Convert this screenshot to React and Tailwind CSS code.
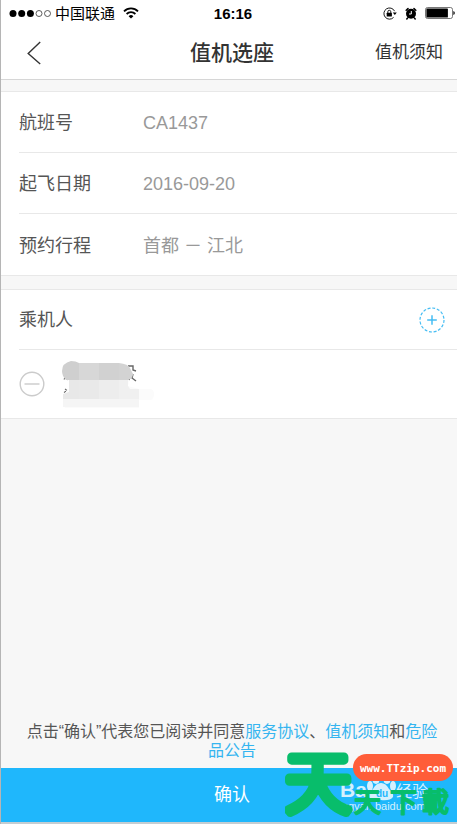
import React from 'react';

const flightInfo = [
  { label: '航班号', value: 'CA1437' },
  { label: '起飞日期', value: '2016-09-20' },
  { label: '预约行程', value: '首都 － 江北' },
];

const StatusBar = () => {
  return (
    <div className="grid h-[26px] grid-cols-3 items-center pr-0.5 pl-2 text-[15px] leading-none text-black">
      <div className="flex items-center gap-1">
        <svg width="42" height="9" viewBox="0 0 42 9">
          <circle cx="4" cy="4.5" r="3.5" fill="#000" />
          <circle cx="12.7" cy="4.5" r="3.5" fill="#000" />
          <circle cx="21.4" cy="4.5" r="3.5" fill="#000" />
          <circle cx="30" cy="4.5" r="3" fill="none" stroke="#333" strokeWidth="0.8" />
          <circle cx="38.5" cy="4.5" r="3" fill="none" stroke="#333" strokeWidth="0.8" />
        </svg>
        <span className="pr-1 whitespace-nowrap">中国联通</span>
        <svg width="16" height="12" viewBox="0 0 16 12" fill="none" stroke="#000" strokeWidth="1.8">
          <path d="M1 4.3a10 10 0 0 1 14 0" />
          <path d="M3.6 7a6.3 6.3 0 0 1 8.8 0" />
          <path d="M8 11.6 5.6 9.2a3.4 3.4 0 0 1 4.8 0z" fill="#000" stroke="none" />
        </svg>
      </div>
      <span className="pl-0.5 text-center font-bold">16:16</span>
      <div className="flex items-center justify-end gap-2">
        <svg width="14" height="13" viewBox="0 0 14 13">
          <path d="M11.6 4.2A5.6 5.6 0 1 0 10.6 10.4" fill="none" stroke="#000" strokeWidth="0.9" />
          <path d="M9.8 5.6h4L11.8 8z" fill="#000" />
          <rect x="3.7" y="5.8" width="5.2" height="3.8" rx="0.5" fill="#000" />
          <path d="M4.8 6V4.8a1.5 1.5 0 0 1 3 0V6" fill="none" stroke="#000" strokeWidth="0.9" />
        </svg>
        <svg width="12" height="13" viewBox="0 0 12 13">
          <circle cx="6" cy="6.8" r="5" fill="#000" />
          <path d="M1.2 3.2 3 1.6M10.8 3.2 9 1.6M2.6 11l-.8 1M9.4 11l.8 1" stroke="#000" strokeWidth="1.5" strokeLinecap="round" />
          <path d="M6.3 4v3H4" fill="none" stroke="#fff" strokeWidth="1" />
        </svg>
        <svg width="30" height="12" viewBox="0 0 30 12">
          <rect x="0.5" y="0.5" width="27" height="11" rx="2" fill="#fff" stroke="#555" strokeWidth="0.8" />
          <rect x="1.4" y="1.4" width="21.5" height="9.2" rx="0.6" fill="#000" />
          <path d="M28.4 4q1.4 0.4 1.4 2t-1.4 2z" fill="#000" />
        </svg>
      </div>
    </div>
  );
};

const Header = () => {
  return (
    <header className="grid h-[54px] grid-cols-[1fr_auto_1fr] items-center border-b border-[#d6d6d6] pr-3.5 pl-5">
      <button type="button" aria-label="返回" className="flex h-10 w-10 items-center pl-1.5">
        <svg width="14" height="24" viewBox="0 0 14 24" fill="none" stroke="#333" strokeWidth="1.4">
          <path d="M13.2 1 1.2 12.5 13.2 23" />
        </svg>
      </button>
      <h1 className="text-[21px] font-medium text-[#333]">值机选座</h1>
      <a href="#notice" className="justify-self-end text-[17px] text-[#333]">值机须知</a>
    </header>
  );
};

// Blurred-out passenger name and ID
const MaskedPassenger = () => {
  return (
    <svg width="100" height="48" viewBox="0 0 100 48" role="img" aria-label="乘机人信息">
      <path d="M3 19.5l1-2M6 19.8l2-1M4 29l2 1.4M3 32.5l2-1.2M3 44l2 1" stroke="#666" strokeWidth="1.1" />
      <path d="M67 6h5v4l3 1M72 14l-1 4 4 3M69 17l-1 3" fill="none" stroke="#666" strokeWidth="1.4" />
      <path d="M8 20h60l-1 6 11 3h12q3 1 3 5t-3 6H78v8H28q-2 2-12 2T2 46V35l6-6z" fill="#fbfbfb" />
      <path d="M8 20h10v19H2v-5l6-2z" fill="#e8e8e8" />
      <path d="M18 20h20v19H18z" fill="#e9e9e9" />
      <path d="M38 20h20v19H38z" fill="#ededed" />
      <path d="M58 20h9v6l2 3h9v10H58z" fill="#f0f0f0" />
      <path d="M2 39h76v8H2z" fill="#f5f5f5" />
      <path d="M10 1q5 0 8 2v17H5q-4-4-4-9 0-8 9-10z" fill="#cfcfcf" />
      <path d="M18 3h20v17H18z" fill="#d7d7d7" />
      <path d="M38 3h20v17H38z" fill="#d1d1d1" />
      <path d="M58 3q9 1 11 5l3 6q0 4-5 6h-9z" fill="#d3d3d3" />
    </svg>
  );
};

const Watermark = () => {
  return (
    <svg
      width="172"
      height="76"
      viewBox="0 0 172 76"
      className="pointer-events-none absolute right-0 bottom-0"
    >
      <g fill="#d5f0fd">
        <text x="55" y="51" fontSize="21" fontWeight="700">Bai</text>
        <ellipse cx="91" cy="32" rx="4" ry="6" />
        <ellipse cx="102" cy="32" rx="4" ry="6" />
        <ellipse cx="85" cy="40" rx="3" ry="5" />
        <ellipse cx="108" cy="40" rx="3" ry="5" />
        <path d="M96 37q5 0 8 6 5 4 4 8-3 4-12 3-9 1-12-3-1-4 4-8 3-6 8-6z" />
        <text x="111" y="51" fontSize="16">经验</text>
        <text x="52" y="64" fontSize="11">jingyan.baidu.com</text>
      </g>
      <text x="91" y="51" fontSize="10" fontWeight="700" fill="#1fb7fc">du</text>
      <g fill="#08bd6b" stroke="#08bd6b" strokeLinejoin="round" strokeLinecap="round">
        <text x="0" y="61" fontSize="66" strokeWidth="9" fontWeight="300">天</text>
        <text x="69 105 137" y="66" fontSize="27" strokeWidth="2">天下載</text>
      </g>
      <rect x="68" y="8" width="100" height="27" rx="13.5" fill="#ff5d39" />
      <text x="118" y="26" fontSize="11" fontWeight="700" textAnchor="middle" fill="#fff" className="font-['DejaVu_Sans_Mono','Liberation_Mono',monospace]">
        www.TTzip.com
      </text>
    </svg>
  );
};

const App = () => {
  return (
    <div className="flex min-h-screen flex-col border-l border-[#b5b5b5] bg-[#f7f7f7] font-['Liberation_Sans','Noto_Sans_CJK_SC',sans-serif]">
      <div className="bg-white">
        <StatusBar />
        <Header />
      </div>

      <main className="flex grow flex-col">
        {/* Flight details */}
        <section className="mt-[11px] border-y border-[#e8e8e8] bg-white pl-[18px]">
          <dl className="divide-y divide-[#e8e8e8] text-lg">
            {flightInfo.map((item) => (
              <div key={item.label} className="flex h-[61px] items-center pt-0.5">
                <dt className="w-[124px] text-[#555]">{item.label}</dt>
                <dd className="text-[#999]">{item.value}</dd>
              </div>
            ))}
          </dl>
        </section>

        {/* Passengers */}
        <section className="mt-[13px] border-y border-[#e8e8e8] bg-white pl-[18px]">
          <div className="flex h-[60px] items-center justify-between border-b border-[#e8e8e8] pr-3">
            <h2 className="text-lg text-[#555]">乘机人</h2>
            <button type="button" aria-label="添加乘机人">
              <svg width="26" height="26" viewBox="0 0 26 26" fill="none" stroke="#45bdf3">
                <circle cx="13" cy="13" r="12" strokeWidth="1.2" strokeDasharray="3 1.7" />
                <path d="M13 8.2v9.6M8.2 13h9.6" strokeWidth="1.5" />
              </svg>
            </button>
          </div>
          <div className="flex h-[68px] items-center gap-4">
            <button type="button" aria-label="删除乘机人">
              <svg width="26" height="26" viewBox="0 0 26 26" fill="none" stroke="#cbcbcb" strokeWidth="1.4">
                <circle cx="13" cy="13" r="11.8" />
                <path d="M5.5 13h15" />
              </svg>
            </button>
            <MaskedPassenger />
          </div>
        </section>

        <p className="mt-auto pr-3 pb-2 pl-[18px] text-center text-base leading-[19px] text-[#555]">
          点击“确认”代表您已阅读并同意
          <a href="#service" className="text-[#35b5f0]">服务协议</a>、
          <a href="#notice" className="text-[#35b5f0]">值机须知</a>和
          <a href="#danger" className="text-[#35b5f0]">危险品公告</a>
        </p>
      </main>

      <footer className="relative border-b-2 border-[#c4cdd2]">
        <button type="button" className="h-[54px] w-full bg-[#1fb7fc] pl-1.5 text-lg text-white">
          确认
        </button>
        <Watermark />
      </footer>
    </div>
  );
};

export default App;
